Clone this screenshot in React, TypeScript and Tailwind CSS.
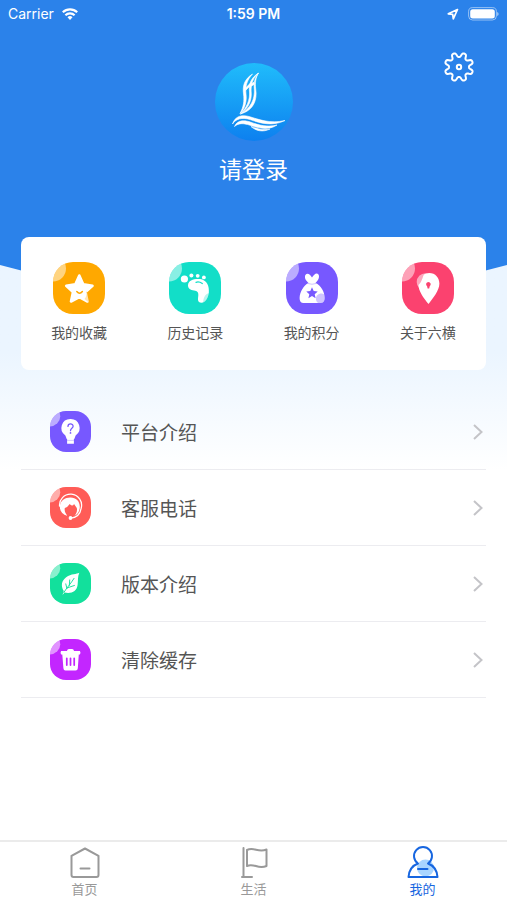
import type { ReactNode } from "react";

const gearPath = (() => {
  const points: string[] = [];
  for (let i = 0; i < 160; i++) {
    const t = (i / 160) * Math.PI * 2;
    const r = 12.2 + 2.3 * Math.tanh(-1.8 * Math.cos(8 * t));
    points.push(`${(16 + r * Math.cos(t)).toFixed(2)} ${(16 + r * Math.sin(t)).toFixed(2)}`);
  }
  return `M${points.join("L")}Z`;
})();

function StatusBar() {
  return (
    <div className="grid h-7 grid-cols-3 items-center px-2 font-['Inter','Liberation_Sans',sans-serif] text-sm text-white">
      <div className="flex items-center gap-2">
        <span>Carrier</span>
        <svg className="h-3 w-4" viewBox="0 0 16 12" fill="none" stroke="currentColor" strokeWidth="2.2" aria-hidden="true">
          <path d="M.8 4.3a10.4 10.4 0 0 1 14.4 0" />
          <path d="M3.4 7.2a6.6 6.6 0 0 1 9.2 0" />
          <path d="M5.5 9.3a3.6 3.6 0 0 1 5 0L8 12z" fill="currentColor" stroke="none" />
        </svg>
      </div>
      <span className="text-center font-semibold">1:59 PM</span>
      <div className="flex items-center justify-end gap-2">
        <svg className="size-3" viewBox="0 0 12 12" fill="none" stroke="currentColor" strokeWidth="1.7" strokeLinejoin="round" aria-hidden="true">
          <path d="M10.500 1.500 1.300 5.800l4.400.6.6 4.400z" />
        </svg>
        <svg className="h-4 w-8" viewBox="0 0 32 16" aria-hidden="true">
          <rect x="1.600" y="1.600" width="27.800" height="12.400" rx="4" fill="none" stroke="#fff" strokeOpacity=".5" />
          <rect x="3.200" y="3.200" width="24.600" height="9.200" rx="2.500" fill="#fff" />
          <path d="M30.200 6v4q1.400-.6 1.400-2t-1.400-2" fill="#fff" fillOpacity=".6" />
        </svg>
      </div>
    </div>
  );
}

function Avatar() {
  return (
    <svg className="size-[78px]" viewBox="0 0 78 78" aria-hidden="true">
      <defs>
        <linearGradient id="avatar" x1="0" y1="0" x2="0" y2="1">
          <stop offset="0" stopColor="#20bcfb" />
          <stop offset="1" stopColor="#0d80ef" />
        </linearGradient>
      </defs>
      <circle cx="39" cy="39" r="39" fill="url(#avatar)" />
      <g fill="#fff" stroke="#fff" strokeWidth=".6" strokeLinejoin="round">
        <path d="M37.500 11C29 16.500 27.500 23 28.500 31C29.500 38 28.500 44 25 50.500C30 46 32 38 31 31C30.200 23 32 17 37.500 11Z" />
        <path d="M43.500 10C36 15 33.500 21 34.500 29C35 37 32 44 25.500 51C33.500 45.500 37 37 36.200 29C35.600 21 38 15 43.500 10Z" />
        <path d="M43.500 10C39.500 15 38.700 20 39.300 26C40 36 36 45 25.500 51C38.500 47.500 42.500 37 40.700 26C40 20 40.500 15 43.500 10Z" />
        <path d="M30.500 25 35 20.500V23L30.500 27.500ZM35 22 39 19V21.500L35 24Z" />
        <path d="M17.500 61C20 53 27 51.500 34 53.500C44 56.500 55 61 70 57.500C58 63.500 46 60.500 35 56.500C27 54 20.500 56 17.500 61Z" />
        <path d="M19.500 63.500C22.500 57 29 56.800 36 59.300C44 62.200 52 64.500 62 62C54 67.500 44 65.500 35 62.200C28 60 23.500 60 19.500 63.500Z" />
        <path d="M36 63.500C43 66 48 67.500 55 66C48 69.500 41 68 36 63.500Z" />
      </g>
    </svg>
  );
}

const starGlyph = (
  <>
    <path d="M26.300 13.500 30.200 22.300 39.500 23.800 32.500 30.100 34.500 39.500 26.300 35 18 39.500 20 30.100 13.200 23.800 22.400 22.300Z" fill="#fff" stroke="#fff" strokeWidth="2.600" strokeLinejoin="round" />
    <path d="M33 28.500Q34.500 34 31.500 37L35.800 40.500Q36.500 35 33 28.500Z" fill="#ffa800" fillOpacity=".3" />
    <path d="M23.800 29.500Q26.600 33 29.400 29.500" fill="none" stroke="#ffa800" strokeWidth="1.500" strokeLinecap="round" />
  </>
);

const footGlyph = (
  <>
    <g fill="#fff">
      <circle cx="15.400" cy="17" r="3.600" />
      <circle cx="22.400" cy="13.500" r="2" />
      <circle cx="28.700" cy="13.800" r="1.900" />
      <circle cx="34.900" cy="15.400" r="1.900" />
      <path d="M19 23.500C19 17.500 26 16.500 31 17C38 18 40.500 24 39.800 31C39 36 36.500 40.800 32.500 40.800C28 40.800 29 36.500 29.300 33.500C29.600 30.500 28.500 29 25 28.500C21.500 28 19 26.500 19 23.500Z" />
    </g>
    <path d="M39.800 31C38.800 37 36.500 40.500 34 40.700C34.500 36 35.500 32.500 39.800 31Z" fill="#12dec8" fillOpacity=".3" />
    <path d="M27 20.300Q30 19.200 33.300 21.500" fill="none" stroke="#12dec8" strokeWidth="1.300" strokeLinecap="round" />
  </>
);

const bagGlyph = (
  <>
    <path d="M22.500 21C20 18.500 18 16 19.400 13C21.500 10.200 24 12.500 26 15.500C28 12.500 30.500 10 32.500 12.500C34 15.500 32 18.500 29.500 21C35 23.500 38.700 30 38.700 36Q38.700 41 34.500 41H17.500Q13.500 41 13.600 36C13.800 30 17.500 23.500 22.500 21Z" fill="#fff" />
    <path d="M22 21.500Q26 23 30 21.500" stroke="#7758ff" strokeOpacity=".35" fill="none" />
    <path d="M26 25.300 27.700 29.100 31.700 29.500 28.700 32.200 29.600 36.200 26 34.100 22.400 36.200 23.300 32.200 20.300 29.500 24.300 29.100Z" fill="#7758ff" />
    <path d="M38.400 32.500A5 5 0 0 0 32 41H34.500Q38.700 41 38.700 36Z" fill="#7758ff" fillOpacity=".35" />
  </>
);

const pinGlyph = (
  <>
    <circle cx="23.500" cy="20" r="8.800" fill="#fff" fillOpacity=".55" />
    <path d="M27.200 11C33.500 11 37.400 16 37.400 21.500C37.400 28.500 31 36 26.500 42C21.500 36 16.500 29 16.500 23C20 20 20.500 15 22 12.500Q24 11 27.200 11Z" fill="#fff" />
    <path d="M26.400 20a2.300 2.300 0 0 1 1.300 4.200L27.200 26.500H25.600L25.100 24.200A2.300 2.300 0 0 1 26.400 20Z" fill="#fb426f" />
  </>
);

const bulbGlyph = (
  <>
    <path d="M26 10.300A11.300 11.300 0 0 1 32.500 31L30.800 35.500H21.200L19.500 31A11.300 11.300 0 0 1 26 10.300ZM21.700 35H30.300V41.500H21.700Z" fill="#fff" />
    <path d="M21.700 37.300H30.300" stroke="#7758ff" strokeOpacity=".4" />
    <path d="M22.800 19.500C22.800 15.500 29.300 15.500 29.300 19.300C29.300 22 26 22 26 25" fill="none" stroke="#7758ff" strokeWidth="1.600" strokeLinecap="round" />
    <circle cx="26" cy="27.800" r="1.100" fill="#7758ff" />
  </>
);

const supportGlyph = (
  <>
    <path d="M12.200 25A14 14 0 1 1 39.500 27C38.500 33.500 34 38.500 26.500 39.500" fill="none" stroke="#fff" strokeWidth="1.600" />
    <path d="M12.500 25C13 17 19 13.300 26 13.300S38 18 37.800 25.500C37.500 31 35.500 34.500 31 36.500C33.500 33.500 34.800 30.500 34 26.500L30.500 21.500Q28.500 25.500 25 21.500Q22.500 25.500 18.800 26.500C18 30 19.500 33.500 22 36.500C16 35 12.500 30.500 12.500 25Z" fill="#fff" />
    <circle cx="26" cy="39.300" r="2.400" fill="#fff" />
  </>
);

const leafGlyph = (
  <>
    <path d="M37.200 12.500C34 14.500 27 13.500 20.500 18C14.500 22.500 13.500 29 17.500 35.500L15.800 40.500L18.500 37.500C27 39.500 34 36 35 28C35.800 21.500 35 17 37.200 12.500Z" fill="#fff" />
    <path d="M17.500 37.500C21.500 31 26.500 26 30.500 19.500M24.500 28.500 25 21.500M21.500 32.500 20 26.500M22.500 31.300 31 28.500" fill="none" stroke="#12e09c" strokeWidth="1.200" strokeLinecap="round" />
  </>
);

const trashGlyph = (
  <>
    <path d="M14 15.300H21.500Q22 12.800 24 12.800H28Q30 12.800 30.500 15.300H38Q39.300 17.500 38 19.800H36.500L35.300 37Q35 39.800 32.500 39.800H19.500Q17.200 39.800 17 37L15.600 19.800H14Q12.800 17.500 14 15.300Z" fill="#fff" />
    <path d="M21.300 24.500V33M26 24.500V33M30.700 24.500V33" stroke="#c326ff" strokeWidth="2.200" strokeLinecap="round" />
  </>
);

function Badge({ color, size, children }: { color: string; size: string; children: ReactNode }) {
  return (
    <svg className={`shrink-0 ${size} ${color}`} viewBox="0 0 52 52" aria-hidden="true">
      <circle cx="0" cy="6.500" r="13" fill="#fff" fillOpacity=".5" />
      {children}
    </svg>
  );
}

const shortcuts = [
  { label: "我的收藏", color: "bg-[#ffa800]", glyph: starGlyph },
  { label: "历史记录", color: "bg-[#12dec8]", glyph: footGlyph },
  { label: "我的积分", color: "bg-[#7758ff]", glyph: bagGlyph },
  { label: "关于六横", color: "bg-[#fb426f]", glyph: pinGlyph },
];

const rows = [
  { label: "平台介绍", color: "bg-[#7758ff]", glyph: bulbGlyph },
  { label: "客服电话", color: "bg-[#ff5c57]", glyph: supportGlyph },
  { label: "版本介绍", color: "bg-[#12e09c]", glyph: leafGlyph },
  { label: "清除缓存", color: "bg-[#c326ff]", glyph: trashGlyph },
];

const tabs = [
  {
    label: "首页",
    active: false,
    icon: <path d="M2.500 9.800 16 2.500 29.500 9.800V29Q29.500 31 27.500 31H4.500Q2.500 31 2.500 29ZM11.500 22.500H20.500" />,
  },
  {
    label: "生活",
    active: false,
    icon: <path d="M5.500 2V31M4 31H14M9 4C16 .5 20 7 28.500 3.500V20C20 24 16 16.500 9 20Z" />,
  },
  {
    label: "我的",
    active: true,
    icon: (
      <>
        <circle cx="18.500" cy="22" r="8.500" fill="#a9d5ff" stroke="none" />
        <path d="M11 17.500A9 9 0 1 1 21 17.500C26.500 19.500 30 24.500 30.500 31H1.500C2 24.500 5.500 19.500 11 17.500ZM11 23H20.500" />
      </>
    ),
  },
];

export default function App() {
  return (
    <div className="relative isolate flex min-h-screen flex-col bg-white font-['Noto_Sans_CJK_SC',sans-serif] text-[#555]">
      <div className="absolute inset-x-0 top-0 -z-10 h-[470px] bg-linear-to-b from-[#ebf5ff] from-75% to-white" aria-hidden="true">
        <svg className="h-[300px] w-full" viewBox="0 0 507 300" preserveAspectRatio="none">
          <path d="M0 0H507V265Q253 335 0 265Z" fill="#2b82ea" />
        </svg>
      </div>

      <header className="text-white">
        <StatusBar />
        <div className="grid grid-cols-[1fr_auto_1fr] px-8 pt-[35px]">
          <div className="col-start-2 flex flex-col items-center gap-3">
            <Avatar />
            <button className="text-[23px] leading-[30px]">请登录</button>
          </div>
          <button className="-mt-3 size-8 justify-self-end" aria-label="设置">
            <svg className="size-8" viewBox="0 0 32 32" fill="none" stroke="currentColor" strokeWidth="2" strokeLinejoin="round" aria-hidden="true">
              <path d={gearPath} />
              <circle cx="16" cy="16" r="2.200" />
            </svg>
          </button>
        </div>
      </header>

      <main className="px-[21px] pb-6">
        <section className="mt-[54px] grid grid-cols-4 rounded-lg bg-white pt-[25px] pb-7">
          {shortcuts.map((item) => (
            <button key={item.label} className="flex flex-col items-center gap-2 text-sm leading-5">
              <Badge color={item.color} size="size-[52px] rounded-[20px]">{item.glyph}</Badge>
              {item.label}
            </button>
          ))}
        </section>

        <ul className="mt-6">
          {rows.map((row) => (
            <li key={row.label} className="border-b border-[#ececf0]">
              <button className="flex h-[75px] w-full items-center pr-[3px] pl-[29px] text-left text-[19px] leading-7">
                <Badge color={row.color} size="size-[41px] rounded-[16px]">{row.glyph}</Badge>
                <span className="ml-[30px] flex-1">{row.label}</span>
                <svg className="h-4 w-2.5" viewBox="0 0 10 16" fill="none" stroke="#c4c4c8" strokeWidth="2" aria-hidden="true">
                  <path d="M1 1 8.500 8 1 15" />
                </svg>
              </button>
            </li>
          ))}
        </ul>
      </main>

      <nav className="mt-auto grid grid-cols-3 border-t-2 border-[#ebebeb] bg-white pt-1">
        {tabs.map((tab) => (
          <a
            key={tab.label}
            href="#"
            aria-current={tab.active ? "page" : undefined}
            className={`flex flex-col items-center text-[13px] leading-[22px] ${tab.active ? "text-[#1766e0]" : "text-[#999]"}`}
          >
            <svg className="size-8" viewBox="0 0 32 32" fill="none" stroke="currentColor" strokeWidth="2" strokeLinejoin="round" strokeLinecap="round" aria-hidden="true">
              {tab.icon}
            </svg>
            {tab.label}
          </a>
        ))}
      </nav>
    </div>
  );
}
